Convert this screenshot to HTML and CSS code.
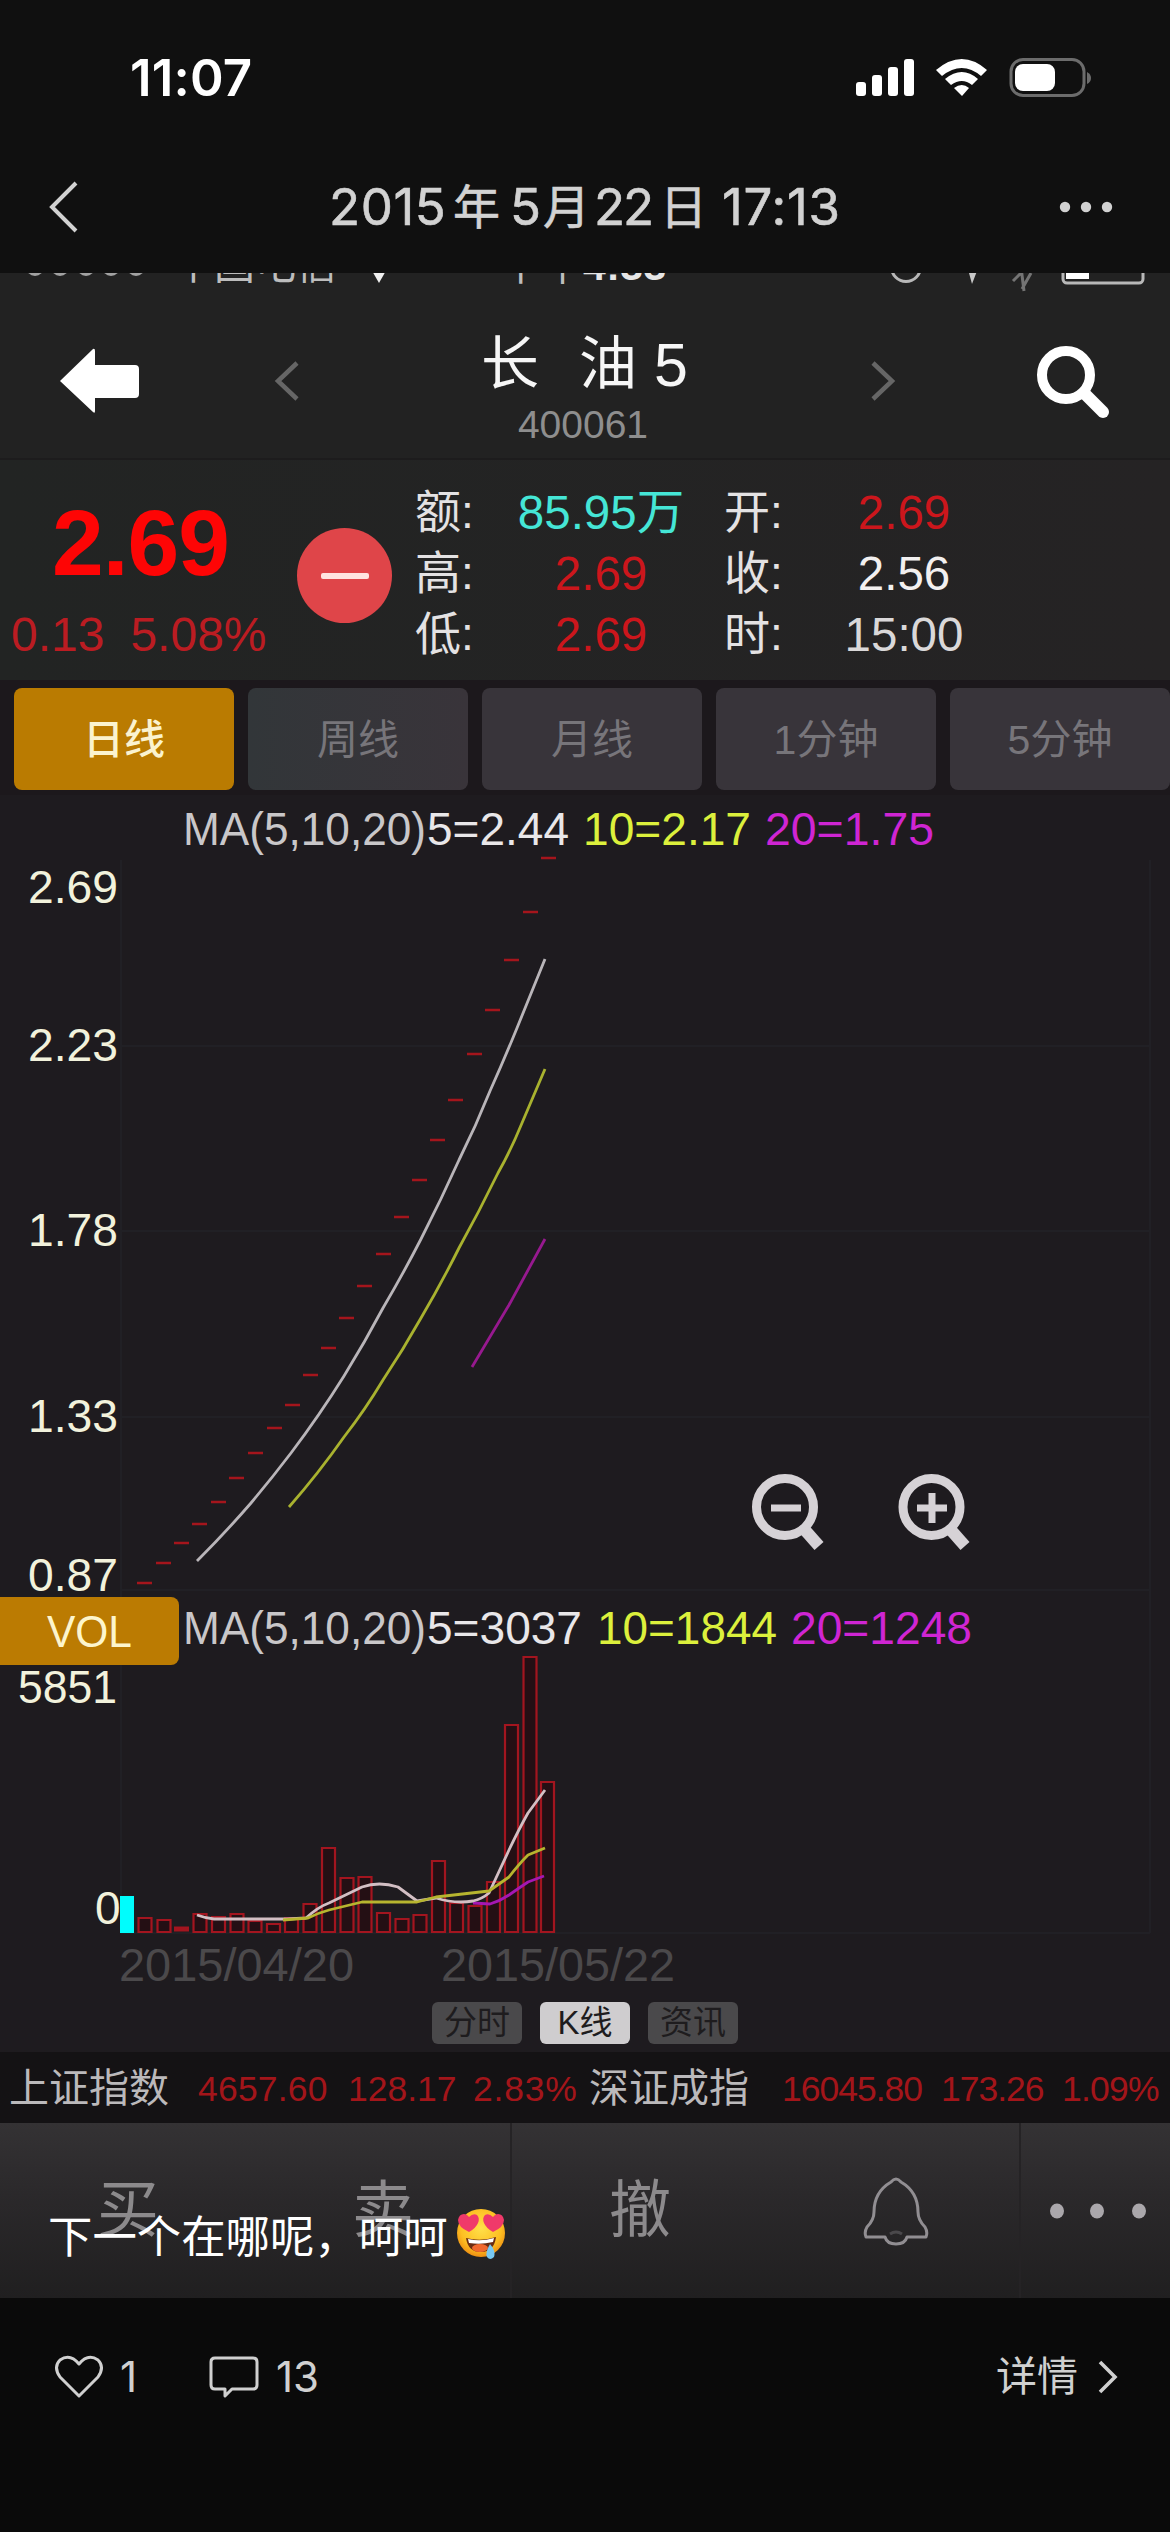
FILE: index.html
```html
<!DOCTYPE html>
<html lang="zh-CN">
<head>
<meta charset="utf-8">
<title>2015年5月22日 17:13</title>
<link rel="stylesheet" href="styles.css">
</head>
<body>
<div class="page">
  <header class="top">
    <div class="statusbar">
      <span class="clock">11:07</span>
      <svg class="status-icons" width="240" height="44" viewBox="0 0 240 44">
        <g fill="#fff">
          <rect x="4" y="26" width="10" height="14" rx="3"/>
          <rect x="20" y="19" width="10" height="21" rx="3"/>
          <rect x="36" y="11" width="10" height="29" rx="3"/>
          <rect x="52" y="3" width="10" height="37" rx="3"/>
          <path d="M84 14 Q110 -8 135 14 L129 20 Q110 4 90 20 Z"/>
          <path d="M93 23 Q110 9 126 23 L120 29 Q110 21 99 29 Z"/>
          <path d="M102 32 Q110 26 117 32 L110 40 Z"/>
          <rect x="163" y="8" width="40" height="27" rx="8"/>
        </g>
        <rect x="159" y="3.500" width="73" height="36" rx="12" fill="none" stroke="#6c6c6c" stroke-width="3"/>
        <path d="M235 16 Q239 18 239 22 Q239 26 235 28 Z" fill="#6c6c6c"/>
      </svg>
    </div>
    <div class="navbar">
      <svg class="nav-back" width="32" height="54" viewBox="0 0 32 54"><path d="M28 3 L4 27 L28 51" fill="none" stroke="#d2d2d2" stroke-width="4"/></svg>
      <h1 class="nav-title"><span class="y">2015</span><span class="han yc">年</span><span class="m">5</span><span class="han mc">月</span><span class="dd">22</span><span class="han dc">日</span><span class="time">17:13</span></h1>
      <svg class="nav-more" width="54" height="12" viewBox="0 0 54 12" fill="#d2d2d2"><circle cx="6" cy="6" r="5.200"/><circle cx="27" cy="6" r="5.200"/><circle cx="48" cy="6" r="5.200"/></svg>
    </div>
  </header>

  <main class="shot">
    <div class="carrier">
      <div class="carrier-row">
        <svg class="sig" width="120" height="18" viewBox="0 0 120 18" fill="#a2a2a2"><circle cx="9" cy="8" r="9"/><circle cx="34" cy="8" r="9"/><circle cx="60" cy="8" r="9"/><circle cx="85" cy="8" r="9"/><circle cx="110" cy="8" r="9"/></svg>
        <span class="op">中国电信</span>
        <svg class="wf" width="16" height="14" viewBox="0 0 16 14"><path d="M0 0H16L8 14Z" fill="#f0f0f0"/></svg>
        <span class="ctime">下午<b>4:33</b></span>
        <svg class="cicons" width="260" height="34" viewBox="0 0 260 34" fill="none" stroke="#b8b8b8" stroke-width="3">
          <circle cx="21" cy="8" r="14.500"/>
          <path d="M84 14 L92 12 L87 25 Z" fill="#c8c8c8" stroke="none"/>
          <path d="M128 22 L140 10 M137 30 L146 14 M139 32 L136 8" stroke="#747474"/>
          <rect x="178" y="-4" width="80" height="28" rx="4"/>
          <rect x="181" y="1" width="23" height="19" fill="#fff" stroke="none"/>
        </svg>
      </div>
    </div>

    <div class="stock-head">
      <svg class="arrow" width="80" height="66" viewBox="0 0 80 66"><path d="M0 33 L33 1 Q35 0 35 3 V17 H75 Q79 17 79 21 V46 Q79 50 75 50 H35 V63 Q35 66 33 64 Z" fill="#fff"/></svg>
      <svg class="prev" width="26" height="42" viewBox="0 0 26 42"><path d="M23 3 L4 21 L23 39" fill="none" stroke="#666" stroke-width="4.500"/></svg>
      <div class="stock-name">
        <div class="name"><span>长</span><span>油</span><span class="five">5</span></div>
        <div class="code">400061</div>
      </div>
      <svg class="next" width="26" height="42" viewBox="0 0 26 42"><path d="M3 3 L22 21 L3 39" fill="none" stroke="#666" stroke-width="4.500"/></svg>
      <svg class="search" width="78" height="76" viewBox="0 0 78 76" fill="none" stroke="#fff"><circle cx="31" cy="32" r="24" stroke-width="10"/><path d="M49 50 L68 69" stroke-width="12" stroke-linecap="round"/></svg>
    </div>

    <section class="quote">
      <div class="price">
        <div class="last">2.69</div>
        <div class="chg"><span>0.13</span><span>5.08%</span></div>
      </div>
      <div class="minus"><i></i></div>
      <dl class="facts">
        <dt>额:</dt><dd class="cyan">85.95万</dd><dt class="second">开:</dt><dd class="red">2.69</dd>
        <dt>高:</dt><dd class="red">2.69</dd><dt class="second">收:</dt><dd>2.56</dd>
        <dt>低:</dt><dd class="red">2.69</dd><dt class="second">时:</dt><dd class="dim">15:00</dd>
      </dl>
    </section>

    <nav class="tabs">
      <span class="tab on">日线</span><span class="tab cool">周线</span><span class="tab">月线</span><span class="tab">1分钟</span><span class="tab">5分钟</span>
    </nav>

    <svg class="chart" width="1170" height="1205" viewBox="0 795 1170 1205">
      <g stroke="#212025" stroke-width="2" fill="none">
        <path d="M121 860V1933M121 1046H1150M121 1231H1150M121 1417H1150M121 1590H1150M121 1933H1150M1150 860V1933"/>
      </g>
      <g class="ma">
        <text x="183" y="845" fill="#c9c7c9" textLength="243" lengthAdjust="spacingAndGlyphs">MA(5,10,20)</text>
        <text x="427" y="845" fill="#e9e7e9" textLength="142" lengthAdjust="spacingAndGlyphs">5=2.44</text>
        <text x="583" y="845" fill="#dcf03c" textLength="168" lengthAdjust="spacingAndGlyphs">10=2.17</text>
        <text x="765" y="845" fill="#cf25d3" textLength="169" lengthAdjust="spacingAndGlyphs">20=1.75</text>
      </g>
      <g class="axis">
        <text x="28" y="903" textLength="90" lengthAdjust="spacingAndGlyphs">2.69</text>
        <text x="28" y="1061" textLength="90" lengthAdjust="spacingAndGlyphs">2.23</text>
        <text x="28" y="1246" textLength="90" lengthAdjust="spacingAndGlyphs">1.78</text>
        <text x="28" y="1432" textLength="90" lengthAdjust="spacingAndGlyphs">1.33</text>
        <text x="28" y="1591" textLength="90" lengthAdjust="spacingAndGlyphs">0.87</text>
      </g>
      <path stroke="#a5151c" stroke-width="2.500" d="M137 1583h15M156 1563h15M174 1543h15M192 1524h15M211 1502h15M229 1478h15M248 1453h15M267 1428h15M285 1405h15M303 1375h15M321 1348h15M339 1318h15M357 1286h15M376 1254h15M394 1217h15M412 1180h15M430 1140h15M448 1100h15M467 1054h15M485 1010h15M504 960h15M523 912h15M541 858h15"/>
      <g fill="none" stroke-width="2.800" stroke-linejoin="round">
        <path stroke="#b9b5b9" d="M197 1561Q225 1533 251 1503Q272 1478 291 1453Q319 1416 344 1376Q365 1342 383 1308Q403 1274 421 1239Q441 1200 459 1160Q476 1126 490 1091Q504 1060 517 1028L545 959"/>
        <path stroke="#a9b22f" d="M289 1507Q318 1474 344 1437Q365 1410 383 1380Q403 1350 421 1318Q441 1284 459 1248Q479 1212 498 1173Q511 1150 522 1123L545 1069"/>
        <path stroke="#97198f" d="M472 1367L509 1305L545 1239"/>
      </g>
      <g fill="none" stroke="#d6d2d6" stroke-width="9">
        <circle cx="785" cy="1507" r="28.500"/><path d="M804 1529L819 1546" stroke-width="12"/><path d="M771 1508H801" stroke-width="7"/>
        <circle cx="931.500" cy="1507" r="28.500"/><path d="M950 1529L965 1546" stroke-width="12"/><path d="M917 1508H947M932 1493V1523" stroke-width="7"/>
      </g>

      <rect x="-10" y="1597" width="189" height="68" rx="8" fill="#bb7b02"/>
      <text x="47" y="1647" class="vol" textLength="85" lengthAdjust="spacingAndGlyphs">VOL</text>
      <g class="ma">
        <text x="183" y="1644" fill="#c9c7c9" textLength="243" lengthAdjust="spacingAndGlyphs">MA(5,10,20)</text>
        <text x="427" y="1644" fill="#e9e7e9" textLength="155" lengthAdjust="spacingAndGlyphs">5=3037</text>
        <text x="597" y="1644" fill="#dcf03c" textLength="180" lengthAdjust="spacingAndGlyphs">10=1844</text>
        <text x="791" y="1644" fill="#cf25d3" textLength="181" lengthAdjust="spacingAndGlyphs">20=1248</text>
      </g>
      <g class="axis">
        <text x="18" y="1703" textLength="99" lengthAdjust="spacingAndGlyphs">5851</text>
        <text x="95" y="1924">0</text>
      </g>
      <rect x="120" y="1896" width="14" height="37" fill="#00fdfd"/>
      <g fill="#240f14" stroke="#a3151f" stroke-width="2.200">
        <path d="M138.500 1918h13v14h-13zM157.500 1920h13v12h-13zM193.500 1914h13v18h-13zM212 1917h13v15h-13zM230.500 1914h13v18h-13zM248.500 1921h13v11h-13zM267 1924h13v8h-13zM285 1918h13v14h-13zM303.500 1904h13v28h-13zM322 1848h13v84h-13zM340.500 1878h13v54h-13zM358.500 1877h13v55h-13zM377 1913h13v19h-13zM395.500 1919h13v13h-13zM413.500 1915h13v17h-13zM432 1861h13v71h-13zM450 1903h13v29h-13zM468.500 1906h13v26h-13zM487 1882h13v50h-13zM505 1725h13v207h-13zM523.500 1657h13v275h-13zM541 1782h13v150h-13z"/>
        <path d="M174 1929H189" stroke-width="5"/>
      </g>
      <g fill="none" stroke-width="2.800" stroke-linejoin="round">
        <path stroke="#a517b2" d="M473 1903L490 1904Q500 1901 509 1895Q519 1888 528 1882L544 1876"/>
        <path stroke="#d3bfc4" d="M197 1915Q205 1918 214 1919H287L306 1918Q318 1907 329 1903L362 1887Q379 1881 398 1887L417 1901L436 1898Q455 1904 473 1901Q482 1899 489 1893L509 1850Q519 1829 528 1813L545 1790"/>
        <path stroke="#b7b52f" d="M283 1920L308 1918Q318 1913 329 1910L362 1902H417L436 1897L489 1891L509 1877Q519 1864 528 1855L545 1848"/>
      </g>
      <g class="date">
        <text x="119" y="1981" textLength="235" lengthAdjust="spacingAndGlyphs">2015/04/20</text>
        <text x="441" y="1981" textLength="234" lengthAdjust="spacingAndGlyphs">2015/05/22</text>
      </g>
    </svg>

    <div class="pills"><span>分时</span><span class="on">K线</span><span>资讯</span></div>

    <div class="ticker">
      <span class="idx a">上证指数</span><span class="v b">4657.60</span><span class="v c">128.17</span><span class="v d">2.83%</span>
      <span class="idx e">深证成指</span><span class="v f">16045.80</span><span class="v g">173.26</span><span class="v h">1.09%</span>
    </div>

    <div class="toolbar">
      <span>买</span><span>卖</span><span class="edge">撤</span>
      <span class="alert"><svg width="66" height="70" viewBox="0 0 66 70" fill="none" stroke="#918e92" stroke-width="3" stroke-linejoin="round"><path d="M28 6Q33 0 38 6Q55 16 55 36Q55 44 62 51Q65 56 63 61H44Q42 68 33 68Q24 68 22 61H3Q1 56 4 51Q11 44 11 36Q11 16 28 6Z"/><path d="M27 58Q33 54 39 58" stroke="#4a484b"/></svg></span>
      <span class="edge"><svg class="dots" width="98" height="18" viewBox="0 0 98 18" fill="#aaa7ab"><ellipse cx="8" cy="9" rx="7" ry="7.500"/><ellipse cx="48" cy="9" rx="7" ry="7.500"/><ellipse cx="90" cy="9" rx="7" ry="7.500"/></svg></span>
      <p class="caption">下一个在哪呢，呵呵<svg width="50" height="52" viewBox="0 0 50 52">
        <defs><radialGradient id="face" cx="50%" cy="40%" r="60%"><stop offset="0" stop-color="#ffe04a"/><stop offset=".7" stop-color="#fdbf22"/><stop offset="1" stop-color="#ee8f12"/></radialGradient></defs>
        <circle cx="25" cy="25" r="24" fill="url(#face)"/>
        <path d="M10 30Q25 34 40 29Q38 44 25 44Q12 44 10 30Z" fill="#6a2c12"/>
        <path d="M12 31Q25 34 38 30L37 34Q25 37 13 35Z" fill="#fff"/>
        <ellipse cx="24" cy="40" rx="8" ry="4" fill="#f0682e"/>
        <path d="M13 24Q2 19 2 12Q3 6 8 6Q11 6 13 9Q17 5 21 7Q24 10 22 15Q20 20 13 24Z" fill="#f0396a"/>
        <path d="M37 24Q48 19 48 12Q47 6 42 6Q39 6 37 9Q33 5 29 7Q26 10 28 15Q30 20 37 24Z" fill="#f0396a"/>
        <path d="M34 36Q40 43 38 49Q34 53 31 49Q29 45 34 36Z" fill="#78c8f2"/>
      </svg></p>
    </div>
  </main>

  <footer class="foot">
    <svg class="heart" width="50" height="44" viewBox="0 0 50 44"><path d="M25 41L6 22Q-1 12 6 5Q16 -2 25 9Q34 -2 44 5Q51 12 44 22Z" fill="none" stroke="#d0d0d0" stroke-width="3" stroke-linejoin="round"/></svg>
    <span class="likes">1</span>
    <svg class="bubble" width="50" height="44" viewBox="0 0 50 44"><path d="M6 3H44Q48 3 48 7V30Q48 34 44 34H23L16 41V34H6Q2 34 2 30V7Q2 3 6 3Z" fill="none" stroke="#d0d0d0" stroke-width="3" stroke-linejoin="round"/></svg>
    <span class="comments">13</span>
    <span class="detail">详情</span>
    <svg class="go" width="22" height="34" viewBox="0 0 22 34"><path d="M3 2L18 17L3 32" fill="none" stroke="#d0d0d0" stroke-width="3.600"/></svg>
  </footer>
</div>
</body>
</html>
```

FILE: styles.css
```css
* { box-sizing: border-box; margin: 0; padding: 0; }
body { background: #0a0a0a; font-family: "Liberation Sans", "Noto Sans CJK SC", sans-serif; }
svg { display: block; flex: none; }
.page { width: 1170px; height: 2532px; display: flex; flex-direction: column; overflow: hidden; }

.top { height: 273px; background: #101010; color: #d2d2d2; font-family: Inter, "Noto Sans CJK SC", sans-serif; }
.statusbar { height: 144px; padding: 56px 78px 0 130px; display: flex; justify-content: space-between; color: #fff; }
.clock { font-size: 51px; font-weight: 600; line-height: 44px; letter-spacing: 0.2px; }
.navbar { height: 129px; display: flex; align-items: center; padding: 0 57px 3px 48px; }
.nav-title { margin-left: 249px; width: 540px; display: flex; font-size: 51px; font-weight: 400; line-height: 60px; white-space: nowrap; -webkit-text-stroke: 0.6px #d2d2d2; }
.nav-title span { flex: none; }
.nav-title .han { font-size: 47px; }
.nav-title .y { width: 124px; letter-spacing: 0.6px; }
.nav-title .yc { width: 57px; }
.nav-title .m { width: 33px; }
.nav-title .mc { width: 51px; }
.nav-title .dd { width: 66px; letter-spacing: -2px; }
.nav-title .dc { width: 62px; }
.nav-title .time { letter-spacing: 0.8px; }
.nav-more { margin-left: auto; }

.shot { height: 2025px; background: #1e1b1f; display: flex; flex-direction: column; }
.carrier { height: 30px; background: #222; overflow: hidden; display: flex; flex-direction: column; justify-content: flex-end; }
.carrier-row { height: 44px; flex: none; display: flex; align-items: flex-start; color: #bdbdbd; line-height: 44px; font-size: 41px; }
.sig { margin: 0 27px 0 26px; }
.op { width: 198px; line-height: 12px; }
.wf { margin-top: 10px; }
.ctime { width: 384px; margin-left: 114px; line-height: 14px; }
.carrier-row b { color: #e6e6e6; font-size: 41px; letter-spacing: 0.4px; }

.stock-head { height: 155px; background: #222; display: flex; align-items: flex-start; padding-left: 60px; }
.arrow { margin-top: 45px; }
.prev { margin: 57px 0 0 134px; }
.stock-name { width: 570px; text-align: center; }
.name { height: 100px; padding: 29px 0 0 181px; display: flex; color: #f6f6f6; font-size: 58px; line-height: 64px; }
.name span { margin-right: 40px; }
.name span + span { margin-right: 17px; }
.name .five { font-size: 61px; line-height: 66px; }
.code { padding-right: 4px; color: #8e8e8e; font-size: 39px; line-height: 44px; }
.next { margin-top: 57px; }
.search { margin: 40px 0 0 139px; }

.quote { height: 222px; display: flex; background: linear-gradient(90deg, #222423, #252324); border-top: 2px solid #1d1c1d; }
.price { width: 297px; padding-top: 35px; }
.last { padding-left: 52px; font-size: 93px; font-weight: bold; line-height: 96px; letter-spacing: -1px; color: #fe0505; }
.chg { display: flex; padding: 21px 0 0 11px; gap: 26px; color: #bb1c22; font-size: 48px; line-height: 46px; }
.minus { width: 95px; height: 95px; margin-top: 68px; border-radius: 50%; background: #df4549; display: grid; place-items: center; }
.minus i { width: 48px; height: 6px; border-radius: 2px; background: #ffe3e0; }
.facts { display: grid; grid-template-columns: 90px 192px 98px 218px; grid-auto-rows: 61px; margin: 22px 0 0 23px; line-height: 61px; color: #f2f0f0; font-size: 47.500px; }
.facts dt { font-size: 46px; color: #e4e2e3; white-space: nowrap; }
.facts .second { padding-left: 27px; }
.facts dd { text-align: center; }
.facts .cyan { color: #45e6d6; }
.facts .red { color: #cc161c; }
.facts .dim { color: #dad8d9; }

.tabs { height: 115px; padding: 8px 0 5px 14px; display: flex; gap: 14px; overflow: hidden; background: #1c181c; }
.tab { flex: none; width: 220px; height: 102px; border-radius: 8px; background: #38343a; color: #77757a; font-size: 41px; line-height: 105px; text-align: center; }
.tab.cool { background: linear-gradient(90deg, #323639, #39343a); }
.tab.on { background: #ba7b01; color: #fbf3cf; font-weight: 500; }

.chart { font-family: "Liberation Sans", sans-serif; }
.chart .ma { font-size: 47px; }
.chart .axis { font-size: 46px; fill: #f2f2dc; }
.chart .vol { font-size: 45px; fill: #fdf5cc; }
.chart .date { font-size: 46px; fill: #4b494b; }

.pills { height: 52px; padding: 2px 0 8px 432px; display: flex; gap: 18px; }
.pills span { width: 90px; height: 42px; border-radius: 6px; background: #4a494b; color: #1e1c1e; font-size: 33px; line-height: 42px; text-align: center; }
.pills .on { background: #cfcdcf; }

.ticker { height: 71px; background: #141214; display: flex; line-height: 74px; white-space: nowrap; }
.ticker .idx { color: #bbb9bb; font-size: 40px; line-height: 73px; }
.ticker .v { color: #a3151a; font-size: 35.500px; }
.a { width: 188px; padding-left: 9px; }
.b { width: 152px; padding-left: 10px; letter-spacing: 0.2px; }
.c { width: 133px; padding-left: 8px; }
.d { width: 116px; letter-spacing: 0.8px; }
.e { width: 193px; }
.ticker .f { width: 159px; letter-spacing: -1px; }
.ticker .g { width: 121px; letter-spacing: -1px; }
.ticker .h { letter-spacing: -0.8px; }

.toolbar { position: relative; height: 175px; overflow: hidden; display: grid; grid-template-columns: 256px 254px 258px 251px 151px; grid-template-rows: 175px; background: linear-gradient(#343234, #2b292b 40%, #201f20); color: #8c8a8c; font-size: 62px; line-height: 179px; text-align: center; }
.toolbar > span { display: grid; grid-template-rows: 175px; place-items: center; }
.toolbar .edge { border-left: 2px solid #252325; }
.toolbar .alert { padding-left: 4px; }
.dots { margin-left: 4px; }
.caption { position: absolute; left: 48px; top: 80px; display: flex; align-items: center; gap: 8px; color: #fff; font: 44.400px/62px "Noto Sans CJK SC", sans-serif; white-space: nowrap; }

.foot { height: 234px; background: #0a0a0a; display: flex; align-items: flex-start; padding: 57px 51px 0 54px; color: #d0d0d0; font-family: Inter, "Noto Sans CJK SC", sans-serif; font-size: 42px; line-height: 44px; }
.likes { margin-left: 16px; width: 89px; }
.comments { margin-left: 17px; }
.detail { margin-left: auto; font-size: 41px; line-height: 42px; }
.go { margin: 5px 0 0 19px; }
```
